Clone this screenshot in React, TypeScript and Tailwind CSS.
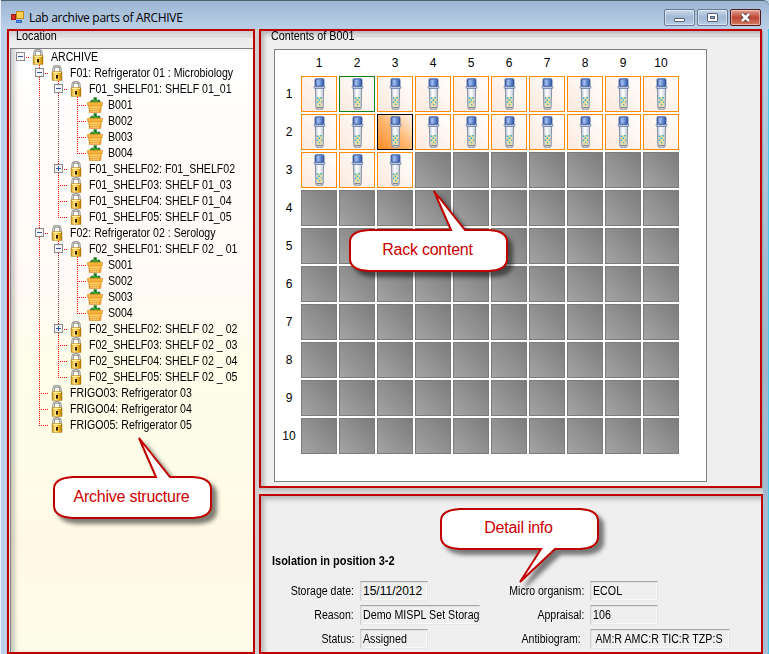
import React from "react";

type Node = { depth: number; label: string; kind: "lock" | "rack"; toggle?: "open" | "closed"; guides: string };

// guides: one letter per column before the icon
// "|" passes through, "+" branches and goes on, "L" is the last branch, " " is empty
const nodes: Node[] = [
  { depth: 0, label: "ARCHIVE", kind: "lock", toggle: "open", guides: "-" },
  { depth: 1, label: "F01: Refrigerator 01 : Microbiology", kind: "lock", toggle: "open", guides: " +" },
  { depth: 2, label: "F01_SHELF01: SHELF 01_01", kind: "lock", toggle: "open", guides: " |+" },
  { depth: 3, label: "B001", kind: "rack", guides: " ||+" },
  { depth: 3, label: "B002", kind: "rack", guides: " ||+" },
  { depth: 3, label: "B003", kind: "rack", guides: " ||+" },
  { depth: 3, label: "B004", kind: "rack", guides: " ||L" },
  { depth: 2, label: "F01_SHELF02: F01_SHELF02", kind: "lock", toggle: "closed", guides: " |+" },
  { depth: 2, label: "F01_SHELF03: SHELF 01_03", kind: "lock", guides: " |+" },
  { depth: 2, label: "F01_SHELF04: SHELF 01_04", kind: "lock", guides: " |+" },
  { depth: 2, label: "F01_SHELF05: SHELF 01_05", kind: "lock", guides: " |L" },
  { depth: 1, label: "F02: Refrigerator 02 : Serology", kind: "lock", toggle: "open", guides: " +" },
  { depth: 2, label: "F02_SHELF01: SHELF 02 _ 01", kind: "lock", toggle: "open", guides: " |+" },
  { depth: 3, label: "S001", kind: "rack", guides: " ||+" },
  { depth: 3, label: "S002", kind: "rack", guides: " ||+" },
  { depth: 3, label: "S003", kind: "rack", guides: " ||+" },
  { depth: 3, label: "S004", kind: "rack", guides: " ||L" },
  { depth: 2, label: "F02_SHELF02: SHELF 02 _ 02", kind: "lock", toggle: "closed", guides: " |+" },
  { depth: 2, label: "F02_SHELF03: SHELF 02 _ 03", kind: "lock", guides: " |+" },
  { depth: 2, label: "F02_SHELF04: SHELF 02 _ 04", kind: "lock", guides: " |+" },
  { depth: 2, label: "F02_SHELF05: SHELF 02 _ 05", kind: "lock", guides: " |L" },
  { depth: 1, label: "FRIGO03: Refrigerator 03", kind: "lock", guides: " +" },
  { depth: 1, label: "FRIGO04: Refrigerator 04", kind: "lock", guides: " +" },
  { depth: 1, label: "FRIGO05: Refrigerator 05", kind: "lock", guides: " L" },
];

function Defs() {
  return (
    <svg className="absolute h-0 w-0">
      <defs>
        <linearGradient id="gold"><stop offset="0" stopColor="#c08a14" /><stop offset=".3" stopColor="#ffe88a" /><stop offset=".65" stopColor="#f5bb2c" /><stop offset="1" stopColor="#b0760a" /></linearGradient>
        <linearGradient id="basket" x2="0" y2="1"><stop offset="0" stopColor="#ffc64a" /><stop offset="1" stopColor="#f0982a" /></linearGradient>
        <linearGradient id="cap"><stop offset="0" stopColor="#3a5da6" /><stop offset=".35" stopColor="#a8c2f2" /><stop offset=".6" stopColor="#6c92d8" /><stop offset="1" stopColor="#34559c" /></linearGradient>
        <linearGradient id="glass"><stop offset="0" stopColor="#b9c3d3" /><stop offset=".4" stopColor="#ffffff" /><stop offset="1" stopColor="#c5cedb" /></linearGradient>
      </defs>
    </svg>
  );
}

function Lock() {
  return (
    <svg width="16" height="16" viewBox="0 0 16 16" className="shrink-0">
      <path d="M4.6 8V4.2C4.6 1.6 6 1.2 8 1.2s3.4.4 3.4 3V8" fill="none" stroke="#868688" strokeWidth="2.4" />
      <path d="M4.6 8V4.2C4.6 1.6 6 1.2 8 1.2s3.4.4 3.4 3V8" fill="none" stroke="#d8d8d5" strokeWidth="1" />
      <rect x="3.1" y="6.6" width="9.9" height="9" rx=".6" fill="url(#gold)" stroke="#a87812" strokeWidth=".5" />
      <path d="M4 7.5h8" stroke="#fff0a0" strokeWidth=".9" />
      <path d="M7 10h2v3.6H7z" fill="#2c1b00" />
    </svg>
  );
}

function Basket() {
  return (
    <svg width="16" height="16" viewBox="0 0 16 16" className="shrink-0">
      <path d="M3 6V4l2.5-1.6L6.6 3V.2h3.2V3l2.4-.4L13.4 4v2z" fill="#237d25" />
      <path d="M5.5 4.6l1.4-1.4 2 1.4 1.8-1" stroke="#54bd48" fill="none" />
      <path d="M1.4 7.4h13.2l-.9 8.2H2.4z" fill="url(#basket)" stroke="#d08420" strokeWidth=".6" />
      <rect x=".4" y="5.2" width="15.2" height="3.2" rx=".8" fill="#fbb53c" stroke="#d08a20" strokeWidth=".6" />
      <path d="M3.5 10.5h9M3.9 12.5h8.2M4.3 14.5h7.4" stroke="#fff0a8" strokeDasharray="1 1" />
    </svg>
  );
}

function Tube() {
  return (
    <svg width="34" height="34" viewBox="0 0 34 34">
      <path d="M13.4 11h8.2l-.5 19.6q-.2 1.6-1.4 1.6h-4.4q-1.2 0-1.4-1.6z" fill="url(#glass)" stroke="#8b95a6" strokeWidth="1.1" />
      <path d="M14.8 20.5l3-.6 2.5-.6-.3 10.7h-4.9z" fill="#efdda0" />
      <path d="M14.8 20.5h1.5v1.5h-1.5zM18.3 20h1.5v1.5h-1.5zM16.6 22.6h1.5v1.5h-1.5zM19 24.4h1.2v1.4H19zM14.9 24.6h1.3v1.3h-1.3zM17 27h1.3v1.3H17z" fill="#1eaee0" />
      <path d="M14.8 30.6h5.4" stroke="#7a8598" strokeWidth="1.2" />
      <rect x="12.2" y="9" width="10.6" height="2.4" rx=".6" fill="#c5d0e5" stroke="#6479a5" strokeWidth=".8" />
      <rect x="13" y="1.8" width="9" height="7.4" rx="1" fill="url(#cap)" stroke="#34538f" strokeWidth=".8" />
      <path d="M14 2.2h7" stroke="#5c80c4" />
    </svg>
  );
}

function Guide({ type, last, toggle, soft }: { type: string; last: boolean; toggle?: string; soft: boolean }) {
  const dot = soft ? "fill-[#9a3a30]" : "fill-[#ff0000]";
  const length = type === "L" ? 5 : 8;
  const dots = type === "|" || type === "+" || type === "L" ? Array.from({ length }, (_, i) => i * 2) : [];
  return (
    <svg width="19" height="16" className="shrink-0" shapeRendering="crispEdges">
      {dots.map((y) => <rect key={y} x="9" y={y} width="1" height="1" className={dot} />)}
      {last && [11, 13, 15, 17].map((x) => <rect key={x} x={x} y="8" width="1" height="1" className="fill-[#ff0000]" />)}
      {toggle && (
        <>
          <rect x="5.5" y="3.5" width="8" height="8" fill="#f5f5f7" stroke="#8b8b8d" />
          <path d={toggle === "open" ? "M7 7.5h5" : "M7 7.5h5M9.5 5v5"} stroke="#31569f" />
        </>
      )}
    </svg>
  );
}

function T({ children, className = "" }: { children: React.ReactNode; className?: string }) {
  return <span className={"inline-block whitespace-pre " + (className || "origin-left scale-x-[.883]")}>{children}</span>;
}

function TreeRow({ n }: { n: Node }) {
  return (
    <div className="flex h-4 items-center">
      {n.guides.split("").map((g, i) => {
        const last = i === n.guides.length - 1;
        return <Guide key={i} type={g} last={last} toggle={last ? n.toggle : undefined} soft={n.depth === 3 && !last} />;
      })}
      {n.kind === "lock" ? <Lock /> : <Basket />}
      <span className="ml-[5px] leading-4"><T>{n.label}</T></span>
    </div>
  );
}

function Cell({ index }: { index: number }) {
  if (index > 22) return <div className="h-9 w-9 border border-[#7c7c7c] bg-linear-to-tr from-[#a4a4a4] to-[#7c7c7c]" />;
  const look =
    index === 12
      ? "border-black bg-linear-to-tr from-[#ff8a10] via-[#ffb770] to-[#fff4e8]"
      : index === 1
        ? "border-[#128012] bg-linear-to-tr from-[#faeadf] to-white"
        : "border-[#ff8c00] bg-linear-to-tr from-[#fbe9dd] to-white";
  return <div className={"h-9 w-9 border " + look}><Tube /></div>;
}

function Field({ label, value, width }: { label: string; value: string; width: string }) {
  return (
    <div className="flex h-5 items-center">
      <span className="w-[94px] text-right"><T className="origin-right scale-x-[.88]">{label}</T></span>
      <div className={"ml-[6px] h-5 overflow-hidden border border-t-[#a5a5a5] border-l-[#d0d2d5] border-r-[#dfe5ec] border-b-[#e2e8ef] pl-[2px] leading-[19px] shadow-[inset_1px_1px_0_#e4e4e4,inset_-1px_-1px_0_#fafafa] " + width}>
        <T className={value.includes("/") ? "origin-left" : "origin-left scale-x-[.89]"}>{value}</T>
      </div>
    </div>
  );
}

function Callout({ label, path, place, textPlace }: { label: string; path: string; place: string; textPlace: string }) {
  return (
    <div className={"absolute h-[110px] w-[180px] " + place}>
      <svg width="180" height="110" className="overflow-visible drop-shadow-[5px_5px_2px_rgba(0,0,0,0.5)]">
        <path d={path} fill="white" stroke="#c00000" strokeWidth="2" strokeLinejoin="miter" />
      </svg>
      <div className={"absolute left-0 w-[157px] text-center text-base leading-5 tracking-[-0.25px] text-[#cc0000] " + textPlace}>{label}</div>
    </div>
  );
}

const upTail = (tip: number) =>
  `M20 40H${tip + 17}L${tip} 1L${tip + 31} 40H140Q158 41 158 52V69Q158 80 140 81H20Q1 80 1 69V52Q1 41 20 40Z`;

function WindowButton({ kind }: { kind: "min" | "max" | "close" }) {
  const look =
    kind === "close"
      ? "border-[#4d1a1b] bg-linear-to-b from-[#e2a094] via-[#bd4635] to-[#d57a60]"
      : "border-[#667a92] bg-linear-to-b from-[#c9daec] via-[#a0b8d4] to-[#b8cee5]";
  return (
    <div className={"h-[17px] w-[31px] rounded-[2px] border shadow-[inset_0_0_0_1px_rgba(255,255,255,0.45)] " + look}>
      <svg width="29" height="15">
        {kind === "min" && <rect x="9.5" y="8.5" width="10" height="3" rx=".5" fill="#fff" stroke="#566271" />}
        {kind === "max" && <><rect x="9.5" y="3.5" width="10" height="8" rx=".5" fill="#fff" stroke="#566271" /><rect x="12.5" y="6.5" width="4" height="2" fill="#8fabc9" stroke="#566271" /></>}
        {kind === "close" && <><path d="M11 4l7 7M18 4l-7 7" stroke="#58383b" strokeWidth="4.4" /><path d="M11 4l7 7M18 4l-7 7" stroke="#fff" strokeWidth="2.6" /></>}
      </svg>
    </div>
  );
}

const bevel = "border-2 border-[#c00000] shadow-[2px_2px_3px_rgba(0,0,0,0.3)]";
const innerShade = "shadow-[inset_4px_4px_5px_-1px_rgba(0,0,0,0.25)]";
const ten = [1, 2, 3, 4, 5, 6, 7, 8, 9, 10];

export default function App() {
  return (
    <div className="relative flex h-[654px] w-[769px] flex-col overflow-hidden border-l border-[#eaf2fa] bg-[#bcd2e9] font-['Liberation_Sans',Arial,sans-serif] text-[12px] text-black">
      <Defs />
      <header className="flex h-[29px] shrink-0 items-start rounded-tr-md border-t border-[#50606f] bg-linear-to-b from-[#9db6d2] to-[#bad0e8] pl-[10px] pr-2">
        <svg width="13" height="13" className="mt-[10px]">
          <rect x="5.5" y=".5" width="7" height="7" fill="#ffd34d" stroke="#c58a19" />
          <rect x=".5" y="3.5" width="4" height="5" fill="#d33120" stroke="#a51c14" />
          <rect x="5.5" y="9.5" width="5" height="2" fill="#5a91e8" stroke="#3566c2" />
        </svg>
        <h1 className="ml-[5px] mt-[8px] whitespace-nowrap font-['Open_Sans',sans-serif] text-[12px] leading-[17px] tracking-[-0.3px]">Lab archive parts of ARCHIVE</h1>
        <div className="ml-auto mt-2 flex gap-[2px]">
          <WindowButton kind="min" />
          <WindowButton kind="max" />
          <WindowButton kind="close" />
        </div>
      </header>
      <main className="flex h-[625px] pl-[6px]">
        <section className={"flex h-[625px] w-[248px] shrink-0 flex-col bg-[#efefef] " + bevel}>
          <div className="flex h-[17px] items-start bg-linear-to-b from-[#cfcfcf] via-[#ececec] to-[#efefef] pl-[7px] leading-[11px]">
            <T className="origin-left scale-x-[.9]">Location</T>
            <div className="-ml-px mt-[5px] h-px grow bg-[#d7d7d7]" />
          </div>
          <div className="ml-px grow border-l border-t border-[#7e7e7e] bg-[linear-gradient(180deg,#ffffff_0%,#fffdfa_16%,#fffaf6_38%,#fdfde9_52%,#fcfce8_67%,#fffce7_74%,#fff8e4_82%,#fffbe6_91%,#fcfce9_100%)] shadow-[inset_5px_0_4px_-1px_rgba(0,0,0,0.2)]">
            {nodes.map((n) => <TreeRow key={n.label} n={n} />)}
          </div>
        </section>
        <div className="w-1 shrink-0 bg-[#cfcfcf]" />
        <div className="flex w-[504px] shrink-0 flex-col bg-[#dadada]">
          <section className={"h-[459px] w-[503px] bg-[#efefef] " + bevel}>
            <div className={"h-full w-full " + innerShade}>
              <div className="flex h-[18px] items-start pl-[10px] leading-[11px]">
                <T className="origin-left scale-x-[.9]">Contents of B001</T>
                <div className="-ml-2 mt-[5px] h-px grow bg-[#d2d2d2]" />
              </div>
              <div className="ml-[13px] h-[433px] w-[433px] border border-[#808080] bg-white">
                <div className="flex h-[26px] items-center gap-[2px] pl-[26px]">
                  {ten.map((c) => <span key={c} className="w-9 text-center">{c}</span>)}
                </div>
                <div className="flex">
                  <div className="flex w-[26px] flex-col gap-[2px] pl-[2px]">
                    {ten.map((r) => <span key={r} className="h-9 text-center leading-[37px]">{r}</span>)}
                  </div>
                  <div className="grid grid-cols-[repeat(10,36px)] gap-[2px]">
                    {Array.from({ length: 100 }, (_, i) => <Cell key={i} index={i} />)}
                  </div>
                </div>
              </div>
            </div>
          </section>
          <div className="h-[6px] shrink-0 bg-linear-to-b from-[#bdbdbd] to-[#e2e2e2]" />
          <section className={"h-[160px] w-[504px] bg-[#efefef] " + bevel}>
            <div className={"h-full w-full pl-[11px] pt-[56px] " + innerShade}>
              <h2 className="h-[29px] font-bold leading-[18px]"><T className="origin-left scale-x-[.915]">Isolation in position 3-2</T></h2>
              <div className="-ml-3 flex">
                <div className="flex w-[230px] flex-col gap-1">
                  <Field label="Storage date:" value="15/11/2012" width="w-[68px]" />
                  <Field label="Reason:" value="Demo MISPL Set Storag" width="w-[120px]" />
                  <Field label="Status:" value="Assigned" width="w-[68px]" />
                </div>
                <div className="flex flex-col gap-1">
                  <Field label="Micro organism:" value="ECOL" width="w-[68px]" />
                  <Field label="Appraisal:" value="106" width="w-[68px]" />
                  <Field label="Antibiogram: " value=" AM:R AMC:R TIC:R TZP:S" width="w-[140px]" />
                </div>
              </div>
            </div>
          </section>
        </div>
        <div className="grow border-r border-[#45c8e4] bg-linear-to-b from-[#b9cfe5] via-[#9fb6cf] to-[#a9bfd8]" />
      </main>
      <Callout label="Archive structure" place="left-[52px] top-[437px]" textPlace="top-[50px]" path={upTail(86)} />
      <Callout label="Rack content" place="left-[348px] top-[190px]" textPlace="top-[50px]" path={upTail(85)} />
      <Callout label="Detail info" place="left-[439px] top-[508px]" textPlace="top-[10px]" path="M20 1H140Q158 2 158 13V29Q158 40 140 41H115L80 74L101 41H20Q1 40 1 29V13Q1 2 20 1Z" />
    </div>
  );
}
